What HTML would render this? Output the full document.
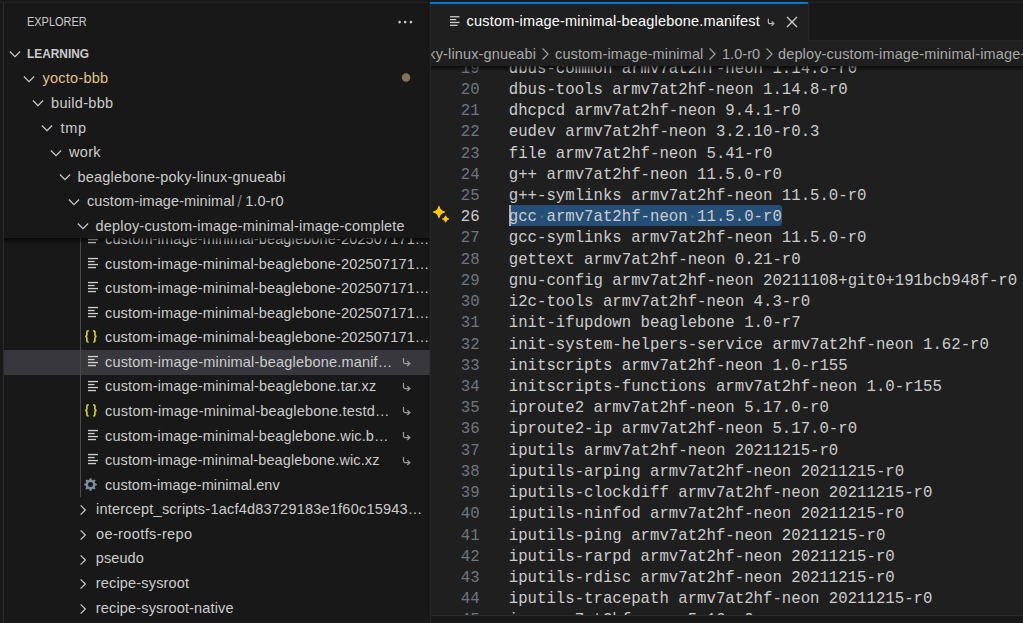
<!DOCTYPE html>
<html><head><meta charset="utf-8"><title>VS Code</title>
<style>
html,body{margin:0;padding:0;background:#181818;}
body{width:1023px;height:623px;overflow:hidden;position:relative;font-family:"Liberation Sans",sans-serif;}
#sidebar{position:absolute;left:0;top:0;width:430.5px;height:623px;background:#181818;overflow:hidden;}
#editor{position:absolute;left:430px;top:0;width:593px;height:623px;background:#1f1f1f;overflow:hidden;}
#editor .ic,#editor .t{margin-left:-430px;}
.t{position:absolute;white-space:nowrap;font-size:14.5px;line-height:20px;height:20px;margin-top:-10px;color:#cccccc;}
.ic{position:absolute;display:block;}
.hdr{font-size:12.3px;color:#cccccc;}
.pane{font-size:12.3px;font-weight:bold;color:#cccccc;}
.sep{opacity:.55;padding:0 3.4px 0 2.6px;font-size:16px;position:relative;top:0.5px;}
.sel{position:absolute;left:4px;width:426px;background:#37373d;}
.guide{position:absolute;width:1px;background:#4b4b4b;}
#sticky{position:absolute;left:4px;top:66.1px;width:426px;height:171.99px;background:#181818;}
#stickyshadow{position:absolute;left:4px;top:238.09px;width:426px;height:6px;background:linear-gradient(#000000a0,#00000000);}
.dot{position:absolute;width:9px;height:9px;border-radius:50%;background:#8a7659;}
.more{position:absolute;width:16px;height:3px;}
.more i{position:absolute;top:0;width:2.5px;height:2.5px;border-radius:50%;background:#cccccc;}
.more i:nth-child(1){left:0px} .more i:nth-child(2){left:5.5px} .more i:nth-child(3){left:11px}
.jsn{font-family:"Liberation Sans",sans-serif;font-weight:bold;font-size:13px;line-height:20px;color:#cbcb41;letter-spacing:1.6px;}
.ln{position:absolute;left:0;width:49.60000000000002px;text-align:right;font-family:"Liberation Mono",monospace;font-size:15.7px;color:#6e7681;padding-top:2px;}
.ln.act{color:#cccccc;}
.cl{position:absolute;left:78.80000000000001px;white-space:pre;font-family:"Liberation Mono",monospace;font-size:15.7px;color:#cccccc;padding-top:2px;}
.ws{font-weight:normal;color:#5a6a7c;}
.selbg{position:absolute;margin-left:-430px;background:#264f78;border-radius:3px;}
.cursor{position:absolute;margin-left:-430px;width:1.6px;background:#aeafad;}
#tabs{position:absolute;left:0;top:0;width:593px;height:41px;background:#181818;}
#tab{position:absolute;left:0;top:2px;width:378px;height:39px;background:#1f1f1f;}
#tabtop{display:none;}
.tabt{color:#ffffff;}
#crumbs{position:absolute;left:0;top:41px;width:593px;height:25px;background:#1f1f1f;}
.bc{color:#a9a9a9;}
#edshadow{position:absolute;left:0;top:66px;width:593px;height:6px;background:linear-gradient(#000000a0,#00000000);}
#topline{display:none;}
#leftline{position:absolute;left:3px;top:2px;width:1px;height:621px;background:#2b2b2b;}
#sbborder{display:none;}
#bottom{position:absolute;left:430px;top:615px;width:593px;height:8px;background:#181818;border-top:1px solid #2b2b2b;}
</style></head>
<body>
<div id="sidebar">
<svg class="ic" style="left:88px;top:232.28px" width="10.0" height="12" viewBox="0 0 10 12"><g fill="#cfd2d1"><rect x="0" y="0.9" width="10" height="1.3"/><rect x="0" y="3.9" width="6.6" height="1.3"/><rect x="0" y="6.9" width="10" height="1.3"/><rect x="0" y="9.9" width="8" height="1.3"/></g></svg>
<div class="t" id="f0" style="left:105.0px;top:238.98px;letter-spacing:0.146px;">custom-image-minimal-beaglebone-202507171…</div>
<svg class="ic" style="left:88px;top:256.86px" width="10.0" height="12" viewBox="0 0 10 12"><g fill="#cfd2d1"><rect x="0" y="0.9" width="10" height="1.3"/><rect x="0" y="3.9" width="6.6" height="1.3"/><rect x="0" y="6.9" width="10" height="1.3"/><rect x="0" y="9.9" width="8" height="1.3"/></g></svg>
<div class="t" id="f1" style="left:105.0px;top:263.56px;letter-spacing:0.146px;">custom-image-minimal-beaglebone-202507171…</div>
<svg class="ic" style="left:88px;top:281.43px" width="10.0" height="12" viewBox="0 0 10 12"><g fill="#cfd2d1"><rect x="0" y="0.9" width="10" height="1.3"/><rect x="0" y="3.9" width="6.6" height="1.3"/><rect x="0" y="6.9" width="10" height="1.3"/><rect x="0" y="9.9" width="8" height="1.3"/></g></svg>
<div class="t" id="f2" style="left:105.0px;top:288.12px;letter-spacing:0.146px;">custom-image-minimal-beaglebone-202507171…</div>
<svg class="ic" style="left:88px;top:306.00px" width="10.0" height="12" viewBox="0 0 10 12"><g fill="#cfd2d1"><rect x="0" y="0.9" width="10" height="1.3"/><rect x="0" y="3.9" width="6.6" height="1.3"/><rect x="0" y="6.9" width="10" height="1.3"/><rect x="0" y="9.9" width="8" height="1.3"/></g></svg>
<div class="t" id="f3" style="left:105.0px;top:312.70px;letter-spacing:0.146px;">custom-image-minimal-beaglebone-202507171…</div>
<svg class="ic" style="left:84px;top:330.47px" width="14" height="14" viewBox="0 0 14 14"><path d="M4.7 0.9 H4.2 Q2.9 0.9 2.9 2.3 V4.7 Q2.9 6.3 1.2 6.45 Q2.9 6.6 2.9 8.2 V10.6 Q2.9 12 4.2 12 H4.7" fill="none" stroke="#cbcb41" stroke-width="1.7"/><path d="M9.1 0.9 H9.6 Q10.9 0.9 10.9 2.3 V4.7 Q10.9 6.3 12.6 6.45 Q10.9 6.6 10.9 8.2 V10.6 Q10.9 12 9.6 12 H9.1" fill="none" stroke="#cbcb41" stroke-width="1.7"/></svg>
<div class="t" id="f4" style="left:105.0px;top:337.26px;letter-spacing:0.146px;">custom-image-minimal-beaglebone-202507171…</div>
<div class="sel" style="top:349.75px;height:25px"></div>
<svg class="ic" style="left:88px;top:355.14px" width="10.0" height="12" viewBox="0 0 10 12"><g fill="#cfd2d1"><rect x="0" y="0.9" width="10" height="1.3"/><rect x="0" y="3.9" width="6.6" height="1.3"/><rect x="0" y="6.9" width="10" height="1.3"/><rect x="0" y="9.9" width="8" height="1.3"/></g></svg>
<div class="t" id="f5" style="left:105.0px;top:361.84px;letter-spacing:0.184px;">custom-image-minimal-beaglebone.manif…</div>
<svg class="ic" style="left:402px;top:356.34px" width="9.40" height="11.30" viewBox="0 0 10 12"><path d="M1.6 2 V6.4 Q1.6 8 3.2 8 H7.6" fill="none" stroke="#9d9d9d" stroke-width="1.3"/><path d="M5.6 5.4 L8.4 8 L5.6 10.6" fill="none" stroke="#9d9d9d" stroke-width="1.3"/></svg>
<svg class="ic" style="left:88px;top:379.71px" width="10.0" height="12" viewBox="0 0 10 12"><g fill="#cfd2d1"><rect x="0" y="0.9" width="10" height="1.3"/><rect x="0" y="3.9" width="6.6" height="1.3"/><rect x="0" y="6.9" width="10" height="1.3"/><rect x="0" y="9.9" width="8" height="1.3"/></g></svg>
<div class="t" id="f6" style="left:105.0px;top:386.41px;letter-spacing:0.162px;">custom-image-minimal-beaglebone.tar.xz</div>
<svg class="ic" style="left:402px;top:380.91px" width="9.40" height="11.30" viewBox="0 0 10 12"><path d="M1.6 2 V6.4 Q1.6 8 3.2 8 H7.6" fill="none" stroke="#9d9d9d" stroke-width="1.3"/><path d="M5.6 5.4 L8.4 8 L5.6 10.6" fill="none" stroke="#9d9d9d" stroke-width="1.3"/></svg>
<svg class="ic" style="left:84px;top:404.18px" width="14" height="14" viewBox="0 0 14 14"><path d="M4.7 0.9 H4.2 Q2.9 0.9 2.9 2.3 V4.7 Q2.9 6.3 1.2 6.45 Q2.9 6.6 2.9 8.2 V10.6 Q2.9 12 4.2 12 H4.7" fill="none" stroke="#cbcb41" stroke-width="1.7"/><path d="M9.1 0.9 H9.6 Q10.9 0.9 10.9 2.3 V4.7 Q10.9 6.3 12.6 6.45 Q10.9 6.6 10.9 8.2 V10.6 Q10.9 12 9.6 12 H9.1" fill="none" stroke="#cbcb41" stroke-width="1.7"/></svg>
<div class="t" id="f7" style="left:105.0px;top:410.98px;letter-spacing:0.216px;">custom-image-minimal-beaglebone.testd…</div>
<svg class="ic" style="left:402px;top:405.48px" width="9.40" height="11.30" viewBox="0 0 10 12"><path d="M1.6 2 V6.4 Q1.6 8 3.2 8 H7.6" fill="none" stroke="#9d9d9d" stroke-width="1.3"/><path d="M5.6 5.4 L8.4 8 L5.6 10.6" fill="none" stroke="#9d9d9d" stroke-width="1.3"/></svg>
<svg class="ic" style="left:88px;top:428.85px" width="10.0" height="12" viewBox="0 0 10 12"><g fill="#cfd2d1"><rect x="0" y="0.9" width="10" height="1.3"/><rect x="0" y="3.9" width="6.6" height="1.3"/><rect x="0" y="6.9" width="10" height="1.3"/><rect x="0" y="9.9" width="8" height="1.3"/></g></svg>
<div class="t" id="f8" style="left:105.0px;top:435.55px;letter-spacing:0.149px;">custom-image-minimal-beaglebone.wic.b…</div>
<svg class="ic" style="left:402px;top:430.05px" width="9.40" height="11.30" viewBox="0 0 10 12"><path d="M1.6 2 V6.4 Q1.6 8 3.2 8 H7.6" fill="none" stroke="#9d9d9d" stroke-width="1.3"/><path d="M5.6 5.4 L8.4 8 L5.6 10.6" fill="none" stroke="#9d9d9d" stroke-width="1.3"/></svg>
<svg class="ic" style="left:88px;top:453.42px" width="10.0" height="12" viewBox="0 0 10 12"><g fill="#cfd2d1"><rect x="0" y="0.9" width="10" height="1.3"/><rect x="0" y="3.9" width="6.6" height="1.3"/><rect x="0" y="6.9" width="10" height="1.3"/><rect x="0" y="9.9" width="8" height="1.3"/></g></svg>
<div class="t" id="f9" style="left:105.0px;top:460.12px;letter-spacing:0.122px;">custom-image-minimal-beaglebone.wic.xz</div>
<svg class="ic" style="left:402px;top:454.62px" width="9.40" height="11.30" viewBox="0 0 10 12"><path d="M1.6 2 V6.4 Q1.6 8 3.2 8 H7.6" fill="none" stroke="#9d9d9d" stroke-width="1.3"/><path d="M5.6 5.4 L8.4 8 L5.6 10.6" fill="none" stroke="#9d9d9d" stroke-width="1.3"/></svg>
<svg class="ic" style="left:84.4px;top:477.79px" width="13" height="13" viewBox="0 0 13 13"><path d="M12.85 5.69 L12.85 7.31 L11.23 7.79 L10.75 8.93 L11.56 10.42 L10.42 11.56 L8.93 10.75 L7.79 11.23 L7.31 12.85 L5.69 12.85 L5.21 11.23 L4.07 10.75 L2.58 11.56 L1.44 10.42 L2.25 8.93 L1.77 7.79 L0.15 7.31 L0.15 5.69 L1.77 5.21 L2.25 4.07 L1.44 2.58 L2.58 1.44 L4.07 2.25 L5.21 1.77 L5.69 0.15 L7.31 0.15 L7.79 1.77 L8.93 2.25 L10.42 1.44 L11.56 2.58 L10.75 4.07 L11.23 5.21 Z" fill="#7a8f9b"/><circle cx="6.5" cy="6.5" r="2.5" fill="#181818"/></svg>
<div class="t" id="f10" style="left:105.0px;top:484.69px;letter-spacing:0.065px;">custom-image-minimal.env</div>
<svg class="ic" style="left:74px;top:501.36px" width="18" height="18" viewBox="0 0 18 18"><path d="M6.6 4.3 L11.3 9 L6.6 13.7" fill="none" stroke="#cccccc" stroke-width="1.2"/></svg>
<div class="t" id="f11" style="left:96.0px;top:509.25px;letter-spacing:0.221px;">intercept_scripts-1acf4d83729183e1f60c15943…</div>
<svg class="ic" style="left:74px;top:525.92px" width="18" height="18" viewBox="0 0 18 18"><path d="M6.6 4.3 L11.3 9 L6.6 13.7" fill="none" stroke="#cccccc" stroke-width="1.2"/></svg>
<div class="t" id="f12" style="left:96.0px;top:533.83px;letter-spacing:0.385px;">oe-rootfs-repo</div>
<svg class="ic" style="left:74px;top:550.50px" width="18" height="18" viewBox="0 0 18 18"><path d="M6.6 4.3 L11.3 9 L6.6 13.7" fill="none" stroke="#cccccc" stroke-width="1.2"/></svg>
<div class="t" id="f13" style="left:95.8px;top:558.40px;letter-spacing:0.080px;">pseudo</div>
<svg class="ic" style="left:74px;top:575.06px" width="18" height="18" viewBox="0 0 18 18"><path d="M6.6 4.3 L11.3 9 L6.6 13.7" fill="none" stroke="#cccccc" stroke-width="1.2"/></svg>
<div class="t" id="f14" style="left:95.8px;top:582.97px;letter-spacing:0.169px;">recipe-sysroot</div>
<svg class="ic" style="left:74px;top:599.63px" width="18" height="18" viewBox="0 0 18 18"><path d="M6.6 4.3 L11.3 9 L6.6 13.7" fill="none" stroke="#cccccc" stroke-width="1.2"/></svg>
<div class="t" id="f15" style="left:95.8px;top:607.53px;letter-spacing:0.160px;">recipe-sysroot-native</div>
<div class="guide" style="left:80px;top:237px;height:260px"></div>
<div id="sticky"></div>
<div id="stickyshadow"></div>
<svg class="ic" style="left:20.4px;top:69.78px" width="18" height="18" viewBox="0 0 18 18"><path d="M3.9 6.5 L9 11.6 L14.1 6.5" fill="none" stroke="#cccccc" stroke-width="1.2"/></svg>
<div class="t" id="t0" style="left:42.5px;top:78.38px;color:#e2c08d;letter-spacing:0.250px;">yocto-bbb</div>
<svg class="ic" style="left:29.4px;top:94.35px" width="18" height="18" viewBox="0 0 18 18"><path d="M3.9 6.5 L9 11.6 L14.1 6.5" fill="none" stroke="#cccccc" stroke-width="1.2"/></svg>
<div class="t" id="t1" style="left:51.0px;top:102.95px;letter-spacing:0.312px;">build-bbb</div>
<svg class="ic" style="left:38.4px;top:118.92px" width="18" height="18" viewBox="0 0 18 18"><path d="M3.9 6.5 L9 11.6 L14.1 6.5" fill="none" stroke="#cccccc" stroke-width="1.2"/></svg>
<div class="t" id="t2" style="left:60.5px;top:127.52px;letter-spacing:0.750px;">tmp</div>
<svg class="ic" style="left:47.4px;top:143.50px" width="18" height="18" viewBox="0 0 18 18"><path d="M3.9 6.5 L9 11.6 L14.1 6.5" fill="none" stroke="#cccccc" stroke-width="1.2"/></svg>
<div class="t" id="t3" style="left:69.0px;top:152.09px;letter-spacing:0.333px;">work</div>
<svg class="ic" style="left:56.4px;top:168.06px" width="18" height="18" viewBox="0 0 18 18"><path d="M3.9 6.5 L9 11.6 L14.1 6.5" fill="none" stroke="#cccccc" stroke-width="1.2"/></svg>
<div class="t" id="t4" style="left:77.5px;top:176.66px;letter-spacing:0.197px;">beaglebone-poky-linux-gnueabi</div>
<svg class="ic" style="left:65.4px;top:192.63px" width="18" height="18" viewBox="0 0 18 18"><path d="M3.9 6.5 L9 11.6 L14.1 6.5" fill="none" stroke="#cccccc" stroke-width="1.2"/></svg>
<div class="t" id="t5" style="left:87.0px;top:201.23px;letter-spacing:0.090px;">custom-image-minimal<span class="sep">/</span>1.0-r0</div>
<svg class="ic" style="left:74.4px;top:217.21px" width="18" height="18" viewBox="0 0 18 18"><path d="M3.9 6.5 L9 11.6 L14.1 6.5" fill="none" stroke="#cccccc" stroke-width="1.2"/></svg>
<div class="t" id="t6" style="left:95.5px;top:225.81px;letter-spacing:0.189px;">deploy-custom-image-minimal-image-complete</div>
<svg class="ic" style="left:400px;top:72px" width="12" height="12" viewBox="0 0 12 12"><circle cx="6.05" cy="5.5" r="4.2" fill="#87705a"/></svg>
<div class="t hdr" id="hdr" style="left:26.5px;top:21.50px;letter-spacing:0.000px;transform:scaleX(0.8896);transform-origin:0 50%;">EXPLORER</div>
<svg class="ic" style="left:396px;top:18px" width="18" height="8" viewBox="0 0 18 8"><g fill="#cccccc"><circle cx="3.6" cy="4.1" r="1.3"/><circle cx="9.2" cy="4.1" r="1.3"/><circle cx="14.9" cy="4.1" r="1.3"/></g></svg>
<svg class="ic" style="left:6.2px;top:44.80px" width="18" height="18" viewBox="0 0 18 18"><path d="M3.9 6.5 L9 11.6 L14.1 6.5" fill="none" stroke="#cccccc" stroke-width="1.2"/></svg>
<div class="t pane" id="pane" style="left:26.5px;top:54.20px;letter-spacing:0.000px;transform:scaleX(0.9656);transform-origin:0 50%;">LEARNING</div>
</div>
<div id="editor">
<div class="ln" style="top:56.67px;height:21.22px;line-height:21.22px">19</div>
<div class="cl" style="top:56.67px;height:21.22px;line-height:21.22px">dbus-common armv7at2hf-neon 1.14.8-r0</div>
<div class="ln" style="top:77.89px;height:21.22px;line-height:21.22px">20</div>
<div class="cl" style="top:77.89px;height:21.22px;line-height:21.22px">dbus-tools armv7at2hf-neon 1.14.8-r0</div>
<div class="ln" style="top:99.11px;height:21.22px;line-height:21.22px">21</div>
<div class="cl" style="top:99.11px;height:21.22px;line-height:21.22px">dhcpcd armv7at2hf-neon 9.4.1-r0</div>
<div class="ln" style="top:120.33px;height:21.22px;line-height:21.22px">22</div>
<div class="cl" style="top:120.33px;height:21.22px;line-height:21.22px">eudev armv7at2hf-neon 3.2.10-r0.3</div>
<div class="ln" style="top:141.55px;height:21.22px;line-height:21.22px">23</div>
<div class="cl" style="top:141.55px;height:21.22px;line-height:21.22px">file armv7at2hf-neon 5.41-r0</div>
<div class="ln" style="top:162.77px;height:21.22px;line-height:21.22px">24</div>
<div class="cl" style="top:162.77px;height:21.22px;line-height:21.22px">g++ armv7at2hf-neon 11.5.0-r0</div>
<div class="ln" style="top:183.99px;height:21.22px;line-height:21.22px">25</div>
<div class="cl" style="top:183.99px;height:21.22px;line-height:21.22px">g++-symlinks armv7at2hf-neon 11.5.0-r0</div>
<div class="selbg" style="left:509.0px;top:205.21px;width:272.5px;height:21.22px"></div>
<div class="cursor" style="left:509.0px;top:205.21px;height:21.22px"></div>
<svg class="ic" style="left:432px;top:205.22px" width="19" height="19" viewBox="0 0 19 19"><path d="M7 1.4000000000000004 Q7.90 6.10 12.6 7 Q7.90 7.90 7 12.6 Q6.10 7.90 1.4000000000000004 7 Q6.10 6.10 7 1.4000000000000004 Z" fill="#ffcc00" stroke="#ffcc00" stroke-width="1.2" stroke-linejoin="round"/><path d="M13.6 10.8 Q14.11 13.49 16.8 14 Q14.11 14.51 13.6 17.2 Q13.09 14.51 10.399999999999999 14 Q13.09 13.49 13.6 10.8 Z" fill="#ffcc00" stroke="#ffcc00" stroke-width="1.0" stroke-linejoin="round"/></svg>
<div class="ln act" style="top:205.21px;height:21.22px;line-height:21.22px">26</div>
<div class="cl" style="top:205.21px;height:21.22px;line-height:21.22px">gcc<b class="ws">·</b>armv7at2hf-neon<b class="ws">·</b>11.5.0-r0</div>
<div class="ln" style="top:226.43px;height:21.22px;line-height:21.22px">27</div>
<div class="cl" style="top:226.43px;height:21.22px;line-height:21.22px">gcc-symlinks armv7at2hf-neon 11.5.0-r0</div>
<div class="ln" style="top:247.65px;height:21.22px;line-height:21.22px">28</div>
<div class="cl" style="top:247.65px;height:21.22px;line-height:21.22px">gettext armv7at2hf-neon 0.21-r0</div>
<div class="ln" style="top:268.87px;height:21.22px;line-height:21.22px">29</div>
<div class="cl" style="top:268.87px;height:21.22px;line-height:21.22px">gnu-config armv7at2hf-neon 20211108+git0+191bcb948f-r0</div>
<div class="ln" style="top:290.09px;height:21.22px;line-height:21.22px">30</div>
<div class="cl" style="top:290.09px;height:21.22px;line-height:21.22px">i2c-tools armv7at2hf-neon 4.3-r0</div>
<div class="ln" style="top:311.31px;height:21.22px;line-height:21.22px">31</div>
<div class="cl" style="top:311.31px;height:21.22px;line-height:21.22px">init-ifupdown beaglebone 1.0-r7</div>
<div class="ln" style="top:332.53px;height:21.22px;line-height:21.22px">32</div>
<div class="cl" style="top:332.53px;height:21.22px;line-height:21.22px">init-system-helpers-service armv7at2hf-neon 1.62-r0</div>
<div class="ln" style="top:353.75px;height:21.22px;line-height:21.22px">33</div>
<div class="cl" style="top:353.75px;height:21.22px;line-height:21.22px">initscripts armv7at2hf-neon 1.0-r155</div>
<div class="ln" style="top:374.97px;height:21.22px;line-height:21.22px">34</div>
<div class="cl" style="top:374.97px;height:21.22px;line-height:21.22px">initscripts-functions armv7at2hf-neon 1.0-r155</div>
<div class="ln" style="top:396.19px;height:21.22px;line-height:21.22px">35</div>
<div class="cl" style="top:396.19px;height:21.22px;line-height:21.22px">iproute2 armv7at2hf-neon 5.17.0-r0</div>
<div class="ln" style="top:417.41px;height:21.22px;line-height:21.22px">36</div>
<div class="cl" style="top:417.41px;height:21.22px;line-height:21.22px">iproute2-ip armv7at2hf-neon 5.17.0-r0</div>
<div class="ln" style="top:438.63px;height:21.22px;line-height:21.22px">37</div>
<div class="cl" style="top:438.63px;height:21.22px;line-height:21.22px">iputils armv7at2hf-neon 20211215-r0</div>
<div class="ln" style="top:459.85px;height:21.22px;line-height:21.22px">38</div>
<div class="cl" style="top:459.85px;height:21.22px;line-height:21.22px">iputils-arping armv7at2hf-neon 20211215-r0</div>
<div class="ln" style="top:481.07px;height:21.22px;line-height:21.22px">39</div>
<div class="cl" style="top:481.07px;height:21.22px;line-height:21.22px">iputils-clockdiff armv7at2hf-neon 20211215-r0</div>
<div class="ln" style="top:502.29px;height:21.22px;line-height:21.22px">40</div>
<div class="cl" style="top:502.29px;height:21.22px;line-height:21.22px">iputils-ninfod armv7at2hf-neon 20211215-r0</div>
<div class="ln" style="top:523.51px;height:21.22px;line-height:21.22px">41</div>
<div class="cl" style="top:523.51px;height:21.22px;line-height:21.22px">iputils-ping armv7at2hf-neon 20211215-r0</div>
<div class="ln" style="top:544.73px;height:21.22px;line-height:21.22px">42</div>
<div class="cl" style="top:544.73px;height:21.22px;line-height:21.22px">iputils-rarpd armv7at2hf-neon 20211215-r0</div>
<div class="ln" style="top:565.95px;height:21.22px;line-height:21.22px">43</div>
<div class="cl" style="top:565.95px;height:21.22px;line-height:21.22px">iputils-rdisc armv7at2hf-neon 20211215-r0</div>
<div class="ln" style="top:587.17px;height:21.22px;line-height:21.22px">44</div>
<div class="cl" style="top:587.17px;height:21.22px;line-height:21.22px">iputils-tracepath armv7at2hf-neon 20211215-r0</div>
<div class="ln" style="top:608.39px;height:21.22px;line-height:21.22px">45</div>
<div class="cl" style="top:608.39px;height:21.22px;line-height:21.22px">iw armv7at2hf-neon 5.16-r0</div>
<div id="tabs"></div>
<div id="tab"><div id="tabtop"></div></div>
<svg class="ic" style="left:450px;top:15.10px" width="9.5" height="12" viewBox="0 0 10 12"><g fill="#cfd2d1"><rect x="0" y="0.9" width="10" height="1.3"/><rect x="0" y="3.9" width="6.6" height="1.3"/><rect x="0" y="6.9" width="10" height="1.3"/><rect x="0" y="9.9" width="8" height="1.3"/></g></svg>
<div class="t tabt" id="tabt" style="left:466.5px;top:21.40px;letter-spacing:0.205px;">custom-image-minimal-beaglebone.manifest</div>
<svg class="ic" style="left:766.8px;top:16.50px" width="8.27" height="9.94" viewBox="0 0 10 12"><path d="M1.6 2 V6.4 Q1.6 8 3.2 8 H7.6" fill="none" stroke="#c0c0c0" stroke-width="1.3"/><path d="M5.6 5.4 L8.4 8 L5.6 10.6" fill="none" stroke="#c0c0c0" stroke-width="1.3"/></svg>
<svg class="ic" style="left:784.8px;top:15.2px" width="14" height="14" viewBox="0 0 14 14"><path d="M2 2 L12 12 M12 2 L2 12" stroke="#cccccc" stroke-width="1.4" fill="none"/></svg>
<div id="crumbs"></div>
<div class="t bc" id="bc0" style="left:428.3px;top:53.50px;letter-spacing:0.140px;">ky-linux-gnueabi</div>
<div class="t bc" id="bc1" style="left:555.0px;top:53.50px;letter-spacing:0.132px;">custom-image-minimal</div>
<div class="t bc" id="bc2" style="left:722.0px;top:53.50px;letter-spacing:0.040px;">1.0-r0</div>
<div class="t bc" id="bc3" style="left:778.0px;top:53.50px;letter-spacing:0.140px;">deploy-custom-image-minimal-image-c</div>
<svg class="ic" style="left:538.3px;top:47px" width="14" height="14" viewBox="0 0 14 14"><path d="M4.6 1.5 L10.1 7 L4.6 12.5" fill="none" stroke="#a6a6a6" stroke-width="1.1"/></svg>
<svg class="ic" style="left:705.1px;top:47px" width="14" height="14" viewBox="0 0 14 14"><path d="M4.6 1.5 L10.1 7 L4.6 12.5" fill="none" stroke="#a6a6a6" stroke-width="1.1"/></svg>
<svg class="ic" style="left:761.6px;top:47px" width="14" height="14" viewBox="0 0 14 14"><path d="M4.6 1.5 L10.1 7 L4.6 12.5" fill="none" stroke="#a6a6a6" stroke-width="1.1"/></svg>
<div id="edshadow"></div>
</div>
<div id="bottom"></div>
<div id="topline"></div><div id="leftline"></div><div id="sbborder"></div>
<svg class="ic" id="ovl" style="left:0;top:0" width="1023" height="623" viewBox="0 0 1023 623"><rect x="0" y="1.5" width="430" height="1.2" fill="#222222"/><rect x="430" y="1.6" width="593" height="1.1" fill="#292929"/><rect x="429.6" y="2.6" width="1.5" height="621" fill="#252525"/><rect x="430" y="2" width="378.2" height="2" fill="#0078d4"/><rect x="808.1" y="2.6" width="1.1" height="38.6" fill="#2b2b2b"/><rect x="808.1" y="40.3" width="214.9" height="1.1" fill="#2b2b2b"/></svg>
</body></html>
